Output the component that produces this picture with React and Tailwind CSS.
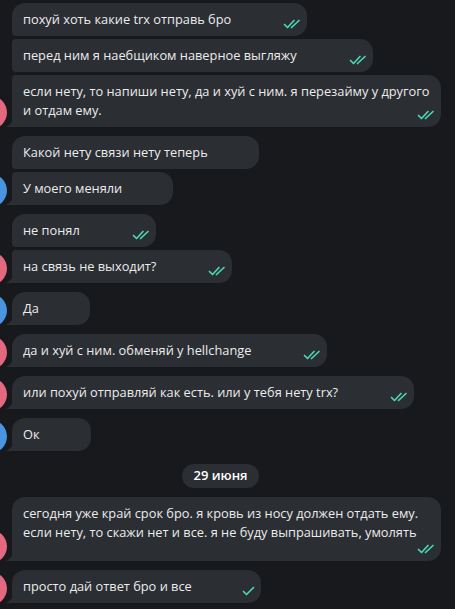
import React from 'react'

const messages = [
  { text: 'похуй хоть какие trx отправь бро', me: true, pos: 'first' },
  { text: 'перед ним я наебщиком наверное выгляжу', me: true, pos: 'middle' },
  { text: 'если нету, то напиши нету, да и хуй с ним. я перезайму у другого и отдам ему.', me: true, pos: 'last' },
  { text: 'Какой нету связи нету теперь', me: false, pos: 'first' },
  { text: 'У моего меняли', me: false, pos: 'last' },
  { text: 'не понял', me: true, pos: 'first' },
  { text: 'на связь не выходит?', me: true, pos: 'last' },
  { text: 'Да', me: false, pos: 'single' },
  { text: 'да и хуй с ним. обменяй у hellchange', me: true, pos: 'single' },
  { text: 'или похуй отправляй как есть. или у тебя нету trx?', me: true, pos: 'single' },
  { text: 'Ок', me: false, pos: 'single' },
  { date: '29 июня' },
  { text: 'сегодня уже край срок бро. я кровь из носу должен отдать ему. если нету, то скажи нет и все. я не буду выпрашивать, умолять', me: true, pos: 'single', timeRow: true },
  { text: 'просто дай ответ бро и все', me: true, pos: 'single', sent: true },
]

function DoubleCheck() {
  return (
    <svg width="18" height="10" viewBox="0 0 18 10" fill="none" stroke="#4ad8b1" strokeWidth="1.7" strokeLinecap="round" strokeLinejoin="round">
      <path d="M1.5 5.5 L4.5 8.5 L11 1.5" />
      <path d="M8.5 8.5 L16 1.5" />
    </svg>
  )
}

function SingleCheck() {
  return (
    <svg width="13" height="10" viewBox="0 0 13 10" fill="none" stroke="#4ad8b1" strokeWidth="1.7" strokeLinecap="round" strokeLinejoin="round">
      <path d="M1.5 5.5 L4.5 8.5 L11.5 1.5" />
    </svg>
  )
}

function Tail() {
  return (
    <svg className="absolute left-[-6px] bottom-0" width="7" height="12" viewBox="0 0 7 12">
      <path d="M7 0 C7 6 5 10 0.5 11.4 C0 11.6 0.2 12 0.8 12 L7 12 Z" fill="#2b2e33" />
    </svg>
  )
}

function Bubble({ m }) {
  const tail = m.pos === 'single' || m.pos === 'last'
  const corners = {
    first: 'rounded-[13px] rounded-bl-[4px]',
    middle: 'rounded-[13px] rounded-tl-[4px] rounded-bl-[4px]',
    last: 'rounded-[13px] rounded-tl-[4px] rounded-bl-none',
    single: 'rounded-[13px] rounded-bl-none',
  }[m.pos]
  const spacer = !m.me ? 'w-[43px]' : m.sent ? 'w-[61px]' : 'w-[68px]'

  return (
    <div className={`flex items-end ${m.pos === 'first' || m.pos === 'single' ? 'mt-[9px]' : 'mt-[3px]'}`}>
      <div
        className={`w-[33px] h-[33px] rounded-full shrink-0 ml-[-26px] mb-[-2px] ${
          tail ? (m.me ? 'bg-[#e4687f]' : 'bg-[#4a95df]') : 'bg-transparent'
        }`}
      />
      <div className={`relative ml-[5px] max-w-[429px] bg-[#2b2e33] ${corners} pl-[11px] pr-[8px] py-[7px] text-[12.8px] leading-[19px] text-[#ececec]`}>
        {tail && <Tail />}
        <span>{m.text}</span>
        {m.timeRow ? <div className="h-[12px]" /> : <span className={`inline-block ${spacer} h-[1px]`} />}
        {m.me && (
          <span className="absolute right-[6px] bottom-[7px] flex">
            {m.sent ? <SingleCheck /> : <DoubleCheck />}
          </span>
        )}
      </div>
    </div>
  )
}

export default function App() {
  return (
    <div
      className="w-[455px] h-[609px] overflow-hidden bg-[#18191d] pt-[3px] pr-[10px]"
      style={{ fontFamily: '"Open Sans", "Noto Sans", sans-serif' }}
    >
      <div className="flex flex-col items-start mt-[-9px]">
        {messages.map((m, i) =>
          m.date ? (
            <div key={i} className="self-stretch flex justify-center mt-[13px]">
              <div className="ml-[-4px] h-[24px] px-[11px] rounded-full bg-[#2b2e33] text-[13px] font-semibold text-white flex items-center">
                {m.date}
              </div>
            </div>
          ) : (
            <Bubble key={i} m={m} />
          )
        )}
      </div>
    </div>
  )
}
